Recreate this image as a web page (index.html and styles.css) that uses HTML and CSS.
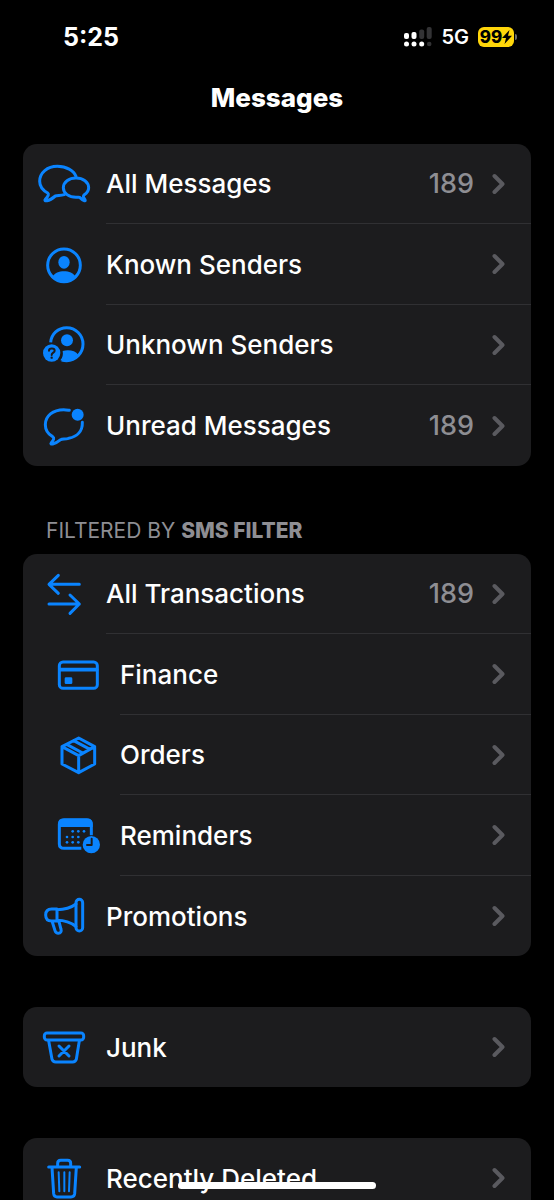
FILE: index.html
```html
<!DOCTYPE html>
<html lang="en">
<head>
<meta charset="utf-8">
<meta name="viewport" content="width=device-width, initial-scale=1">
<title>Messages</title>
<link rel="stylesheet" href="styles.css">
</head>
<body>
<svg width="0" height="0" class="defs" aria-hidden="true">
  <symbol id="chevron" viewBox="0 0 14 22"><path d="M2.500 3 10.500 11 2.500 19" fill="none" stroke="currentColor" stroke-width="4" stroke-linecap="round" stroke-linejoin="round"/></symbol>
</svg>
<div class="screen">
  <header class="status">
    <time class="clock">5:25</time>
    <div class="indicators">
      <svg class="signal" viewBox="0 0 28 20" role="img" aria-label="Signal">
        <g fill="#fff"><rect x="0" y="6" width="5" height="6" rx="2"/><rect x="7.500" y="5" width="5" height="7" rx="2"/><circle cx="2.500" cy="17" r="2.500"/><circle cx="10" cy="17" r="2.500"/><circle cx="17.700" cy="17" r="2.500"/></g>
        <g fill="#333335"><rect x="15.200" y="2.500" width="5" height="9.500" rx="2"/><rect x="22.700" y="0" width="5" height="12" rx="2"/><circle cx="25.200" cy="17" r="2.300"/></g>
      </svg>
      <span class="network">5G</span>
      <span class="battery"><span class="level">99</span><svg class="bolt" viewBox="0 0 10 14" aria-hidden="true"><path d="M7.500 0 0 8h4L2.500 14 10 5.800H6z"/></svg></span>
    </div>
  </header>
  <h1 class="title">Messages</h1>
  <main>
    <nav class="card" aria-label="Messages">
      <a class="row" href="#all">
        <svg class="icon" viewBox="51 57 162 150" aria-hidden="true"><path d="M168 109C161 91 139 79 112 79 82 79 59 98 59 124 59 140 68 151 83 159 87 162 86 167 76 178 73 182 76 183 81 182 92 180 99 174 106 168 113 166 121 167 133 164"/><path d="M193 164C202 158 206 151 206 143 206 126 189 114 168 114S130 126 130 143 147 172 168 172C173 172 176 171 179 172 184 177 188 181 193 182 197 183 196 180 193 176 190 171 188 168 193 164Z"/></svg>
        <span class="body"><span class="label">All Messages</span><span class="count">189</span><svg class="chevron" aria-hidden="true"><use href="#chevron"/></svg></span>
      </a>
      <a class="row" href="#known">
        <svg class="icon" viewBox="51 299 162 150" aria-hidden="true"><circle cx="132" cy="375" r="49"/><ellipse class="solid" cx="132" cy="366" rx="17" ry="19"/><path class="solid" d="M98 409C104 398 117 393 132 393S160 398 166 409C157 418 145 423 132 423S107 418 98 409Z"/></svg>
        <span class="body"><span class="label">Known Senders</span><svg class="chevron" aria-hidden="true"><use href="#chevron"/></svg></span>
      </a>
      <a class="row" href="#unknown">
        <svg class="icon" viewBox="51 45 162 150" aria-hidden="true"><path class="butt" d="M92 112C94 87 114 68 140 68 167 68 189 90 189 117 189 144 167 167 140 167 134 167 129 166 125 165"/><circle class="solid" cx="141" cy="106" r="18"/><path class="solid" d="M128 138C146 133 166 137 175 149 162 165 143 169 121 166 128 158 130 149 128 138Z"/><circle class="solid" cx="95" cy="144" r="26"/><path class="ink" d="M87 137C87 128 104 128 104 137 104 143 95 143 95 150"/><circle class="ink-dot" cx="95" cy="158" r="3.500"/></svg>
        <span class="body"><span class="label">Unknown Senders</span><svg class="chevron" aria-hidden="true"><use href="#chevron"/></svg></span>
      </a>
      <a class="row" href="#unread">
        <svg class="icon" viewBox="51 287 162 150" aria-hidden="true"><path d="M148 315C142 314 137 313 131 313 99 313 76 332 76 358 76 374 84 386 98 394 104 398 101 404 94 412 91 416 93 417 98 416 109 413 116 408 122 403 127 400 134 402 146 399 171 394 188 378 187 351"/><circle class="solid" cx="173" cy="328" r="18"/></svg>
        <span class="body"><span class="label">Unread Messages</span><span class="count">189</span><svg class="chevron" aria-hidden="true"><use href="#chevron"/></svg></span>
      </a>
    </nav>

    <h2 class="group-title">FILTERED BY <b>SMS FILTER</b></h2>
    <nav class="card" aria-label="Filtered by SMS Filter">
      <a class="row" href="#transactions">
        <svg class="icon" viewBox="51 27 162 150" aria-hidden="true"><path d="M178 73H88M115 46 87 73 115 100M87 132H178M150 105 178 132 150 160"/></svg>
        <span class="body"><span class="label">All Transactions</span><span class="count">189</span><svg class="chevron" aria-hidden="true"><use href="#chevron"/></svg></span>
      </a>
      <a class="row nested" href="#finance">
        <svg class="icon" viewBox="93 268 162 150" aria-hidden="true"><rect x="118" y="304" width="114" height="79" rx="11"/><path class="stripe" d="M120 327H230"/><rect class="solid" x="134" y="350" width="23" height="20" rx="4"/></svg>
        <span class="body"><span class="label">Finance</span><svg class="chevron" aria-hidden="true"><use href="#chevron"/></svg></span>
      </a>
      <a class="row nested" href="#orders">
        <svg class="icon" viewBox="93 30 162 150" aria-hidden="true"><path d="M176 54 224 80V132L176 158 126 132V80ZM126 80 176 107 224 80M176 107V158M140 73 188 99M161 62 210 88"/></svg>
        <span class="body"><span class="label">Orders</span><svg class="chevron" aria-hidden="true"><use href="#chevron"/></svg></span>
      </a>
      <a class="row nested" href="#reminders">
        <svg class="icon" viewBox="93 271 162 150" aria-hidden="true"><path class="butt" d="M214 344V312C214 303 210 297 201 297H132C123 297 118 303 118 311V370C118 379 123 383 132 383H184"/><path class="solid" d="M115 319V310C115 300 121 294 131 294H202C213 294 218 300 218 310V319Z"/><g class="solid"><circle cx="158" cy="332" r="4"/><circle cx="175" cy="332" r="4"/><circle cx="192" cy="332" r="4"/><circle cx="141" cy="349" r="4"/><circle cx="158" cy="349" r="4"/><circle cx="175" cy="349" r="4"/><circle cx="141" cy="365" r="4"/><circle cx="158" cy="365" r="4"/><circle cx="175" cy="365" r="4"/></g><circle class="solid" cx="214" cy="372" r="26"/><path class="ink" d="M215 354V373H201"/></svg>
        <span class="body"><span class="label">Reminders</span><svg class="chevron" aria-hidden="true"><use href="#chevron"/></svg></span>
      </a>
      <a class="row" href="#promotions">
        <svg class="icon" viewBox="51 33 162 150" aria-hidden="true"><rect x="168" y="58" width="20" height="95" rx="10"/><path d="M168 72C152 84 133 89 111 89V121C133 121 152 127 168 140M111 87H95C83 87 77 94 77 105S83 123 95 123H111ZM96 123 105 152C107 158 110 160 115 160 122 160 125 154 123 148L117 125"/></svg>
        <span class="body"><span class="label">Promotions</span><svg class="chevron" aria-hidden="true"><use href="#chevron"/></svg></span>
      </a>
    </nav>

    <nav class="card spaced" aria-label="Junk">
      <a class="row" href="#junk">
        <svg class="icon" viewBox="51 66 162 150" aria-hidden="true"><rect x="73" y="99" width="118" height="21" rx="8"/><path d="M86 122 96 178C98 184 101 186 107 186H158C164 186 167 184 169 178L178 122M117 138 147 168M147 138 117 168"/></svg>
        <span class="body"><span class="label">Junk</span><svg class="chevron" aria-hidden="true"><use href="#chevron"/></svg></span>
      </a>
    </nav>

    <nav class="card spaced" aria-label="Recently Deleted">
      <a class="row" href="#deleted">
        <svg class="icon" viewBox="51 69 162 150" aria-hidden="true"><path d="M86 111H179M96 112 101 191C102 199 105 201 111 201H153C160 201 163 199 164 191L169 112M113 110V100C113 93 116 91 122 91H143C149 91 152 94 152 100V110"/><path class="thin" d="M116 127 118 184M133 127V184M149 127 147 184"/></svg>
        <span class="body"><span class="label">Recently Deleted</span><svg class="chevron" aria-hidden="true"><use href="#chevron"/></svg></span>
      </a>
    </nav>
  </main>
  <div class="home-bar"></div>
</div>
</body>
</html>
```

FILE: styles.css
```css
* { box-sizing: border-box; }

body {
  margin: 0;
  background: #000;
  color: #fff;
  font-family: Inter, "Liberation Sans", sans-serif;
}

.defs { position: absolute; }

.screen {
  height: 100vh;
  overflow: hidden;
}

.status {
  display: flex;
  justify-content: space-between;
  align-items: center;
  height: 74px;
  padding: 0 40px 0 63px;
}

.clock {
  font-size: 25px;
  font-weight: 700;
}

.indicators {
  display: flex;
  align-items: center;
}

.signal {
  width: 28px;
  height: 20px;
}

.network {
  margin: 0 9px;
  font-size: 20px;
  font-weight: 600;
}

.battery {
  position: relative;
  display: flex;
  align-items: center;
  justify-content: center;
  width: 36px;
  height: 20px;
  border-radius: 6px;
  background: #ffd60a;
  color: #000;
}

.battery::after {
  content: "";
  position: absolute;
  left: 37px;
  top: 7px;
  width: 2px;
  height: 6px;
  border-radius: 0 2px 2px 0;
  background: #6b6b6b;
}

.level {
  font-size: 17px;
  line-height: 20px;
  font-weight: 800;
}

.bolt {
  width: 10px;
  height: 14px;
}

.title {
  margin: 0 0 22px;
  font-size: 26px;
  line-height: 48px;
  font-weight: 800;
  text-align: center;
}

.card {
  margin: 0 23px;
  border-radius: 14px;
  background: #1c1c1e;
  overflow: hidden;
}

.spaced { margin-top: 51px; }

.group-title {
  margin: 52px 46px 10px;
  color: #8e8e93;
  font-size: 21px;
  line-height: 26px;
  font-weight: 400;
}

.group-title b { font-weight: 800; }

.row {
  display: flex;
  align-items: center;
  gap: 15px;
  height: 80px;
  padding-left: 14px;
  color: inherit;
  text-decoration: none;
}

.row:nth-child(even) { height: 81px; }

.nested { padding-left: 28px; }

.icon {
  flex: none;
  width: 54px;
  height: 50px;
  color: #0a84ff;
  fill: none;
  stroke: currentColor;
  stroke-width: 9px;
  stroke-linecap: round;
  stroke-linejoin: round;
}

.icon .thin { stroke-width: 6px; }
.icon .stripe { stroke-width: 11px; }
.icon .butt { stroke-linecap: butt; }

.icon .solid {
  fill: currentColor;
  stroke: none;
}

.icon .ink {
  stroke: #1c1c1e;
  stroke-width: 6px;
}

.icon .ink-dot {
  fill: #1c1c1e;
  stroke: none;
}

.body {
  flex: 1;
  align-self: stretch;
  display: flex;
  align-items: center;
  padding-right: 25px;
}

.row:not(:last-child) .body { border-bottom: 1px solid #303033; }

.label {
  flex: 1;
  font-size: 26px;
  font-weight: 500;
  white-space: nowrap;
}

.count {
  margin-right: 18px;
  color: #8e8e93;
  font-size: 27px;
  font-weight: 500;
}

.chevron {
  width: 14px;
  height: 22px;
  color: #5a5a5f;
}

.home-bar {
  position: fixed;
  left: 50%;
  bottom: 11px;
  width: 198px;
  height: 7px;
  border-radius: 4px;
  background: #fff;
  transform: translateX(-50%);
}
```
